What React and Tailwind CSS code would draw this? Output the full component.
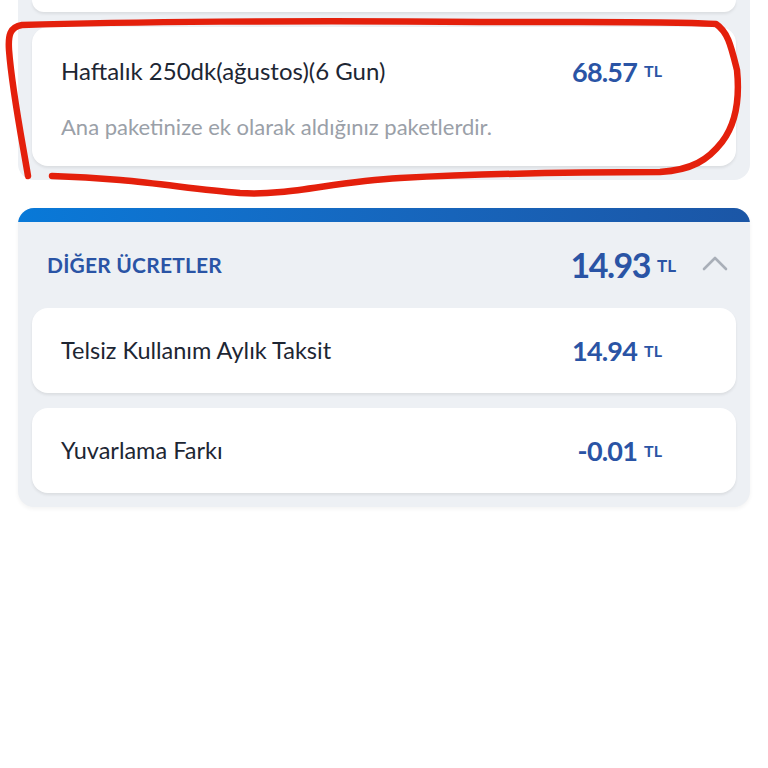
import React from 'react';

const font = { fontFamily: 'Lato, "Open Sans", sans-serif' };

const Amount = ({ value, big }) => (
    <div className="flex items-center gap-[7px] text-[#2a54a5]">
        <span className={big ? 'text-[34px] font-bold tracking-[-1.5px] leading-none' : 'text-[27px] font-bold tracking-[-0.8px] leading-none'}>{value}</span>
        <span className={big ? 'text-[17px] font-bold leading-none' : 'text-[16px] font-bold leading-none'}>TL</span>
    </div>
);

const Row = ({ title, value }) => (
    <div className="bg-white rounded-2xl h-[85px] flex items-center justify-between pl-[29px] pr-[74px] shadow-[0_2px_3px_rgba(0,0,0,0.08)]">
        <span className="text-[23.5px] text-[#1d2633]">{title}</span>
        <Amount value={value} />
    </div>
);

// hand-drawn red marker circle over the first card
const Marker = () => (
    <svg className="absolute left-0 top-0 pointer-events-none" width="768" height="200" viewBox="0 0 768 200">
        <path
            d="M28 176 C22 140 12 90 9 50 C8 35 10 27 22 25 C120 22 300 20 480 22 C600 22 680 21 716 24 C728 32 731 46 737 70 C740 100 735 125 722 142 C708 160 692 170 660 172 C560 172 480 174 400 178 C330 182 290 196 240 193 C180 188 130 178 52 176"
            fill="none"
            stroke="#e4200c"
            strokeWidth="6.5"
            strokeLinecap="round"
            strokeLinejoin="round"
        />
    </svg>
);

export default function App() {
    return (
        <div className="relative w-[768px] h-[768px] bg-white overflow-hidden" style={font}>
            <div className="px-[18px]">
                {/* previous section (cut off at the top) */}
                <div className="bg-[#edf0f4] rounded-b-2xl px-[14px] pb-[14px] flex flex-col gap-[15px]">
                    <div className="bg-white rounded-b-2xl h-[12px] shadow-[0_2px_3px_rgba(0,0,0,0.08)]" />
                    <div className="bg-white rounded-2xl h-[139px] pl-[29px] pr-[74px] pt-[28px] shadow-[0_2px_3px_rgba(0,0,0,0.08)]">
                        <div className="flex items-center justify-between h-[32px]">
                            <span className="text-[24px] text-[#1d2633]">Haftalık 250dk(ağustos)(6 Gun)</span>
                            <Amount value="68.57" />
                        </div>
                        <div className="mt-[23px] text-[22px] text-[#9aa0a8]">Ana paketinize ek olarak aldığınız paketlerdir.</div>
                    </div>
                </div>

                {/* Diğer ücretler */}
                <div className="mt-[28px] rounded-2xl overflow-hidden bg-[#edf0f4] shadow-[0_2px_4px_rgba(0,0,0,0.05)]">
                    <div className="h-[14px] bg-gradient-to-r from-[#0879d8] to-[#1b56a6]" />
                    <div className="px-[14px] pb-[14px]">
                        <div className="h-[86px] flex items-center justify-between pl-[15px] pr-[8px]">
                            <span className="text-[21px] font-bold text-[#2a54a5] tracking-[0.2px]">DİĞER ÜCRETLER</span>
                            <div className="flex items-center gap-[26px]">
                                <Amount value="14.93" big />
                                <svg width="26" height="16" viewBox="0 0 26 16" fill="none" className="mb-[4px]">
                                    <path d="M2 14 L13 3 L24 14" stroke="#a9afb8" strokeWidth="2.6" strokeLinecap="round" strokeLinejoin="round" />
                                </svg>
                            </div>
                        </div>
                        <div className="flex flex-col gap-[15px]">
                            <Row title="Telsiz Kullanım Aylık Taksit" value="14.94" />
                            <Row title="Yuvarlama Farkı" value="-0.01" />
                        </div>
                    </div>
                </div>
            </div>
            <Marker />
        </div>
    );
}
